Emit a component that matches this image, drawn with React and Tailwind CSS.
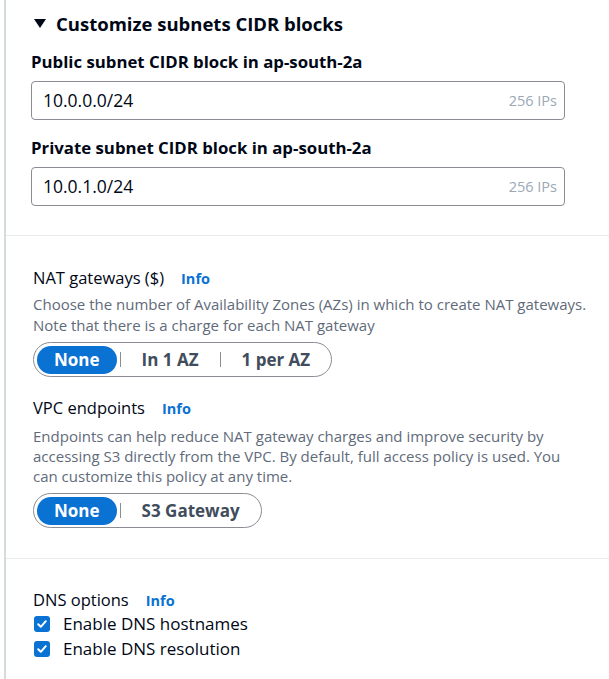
import React, { useState } from 'react';

const font = { fontFamily: '"Open Sans", "Noto Sans", Arial, sans-serif' };

const Info = ({ className = '' }) => (
    <span className={`text-[14.5px] font-bold text-[#0972d3] ${className}`}>Info</span>
);

const CidrInput = ({ label, value }) => (
    <div className="flex flex-col">
        <label className="text-[16.8px] font-bold text-[#000716] leading-[20px]">{label}</label>
        <div className="mt-[9px] w-[534px] h-[39px] border border-[#8c8c94] rounded-[4px] flex items-center justify-between pl-[11px] pr-[7px]">
            <span className="text-[17.5px] text-[#000716]">{value}</span>
            <span className="text-[14.5px] text-[#9ba7b6]">256 IPs</span>
        </div>
    </div>
);

const Segmented = ({ options, value, onChange }) => (
    <div className="inline-flex items-center h-[35px] border border-[#8c8c94] rounded-full p-[3px] self-start">
        {options.map((opt, i) => (
            <React.Fragment key={opt}>
                {i > 0 && <span className="w-px h-[15px] mx-[3px] bg-[#8c8c94]" />}
                <button
                    onClick={() => onChange(opt)}
                    className={
                        value === opt
                            ? 'h-[28px] px-[17px] rounded-full bg-[#0972d3] text-white text-[17px] font-bold'
                            : 'h-[28px] px-[18px] rounded-full text-[#414d5c] text-[17px] font-bold'
                    }
                >
                    {opt}
                </button>
            </React.Fragment>
        ))}
    </div>
);

const Check = ({ label, checked, onToggle }) => (
    <label className="flex items-center gap-[13px] h-[25px] cursor-pointer" onClick={onToggle}>
        <span className={`w-[16px] h-[16px] rounded-[3px] flex items-center justify-center ${checked ? 'bg-[#0972d3]' : 'border-2 border-[#8c8c94]'}`}>
            {checked && (
                <svg width="12" height="12" viewBox="0 0 12 12" fill="none">
                    <path d="M2.2 6.2 L4.8 8.8 L9.8 3.2" stroke="white" strokeWidth="2" strokeLinecap="round" strokeLinejoin="round" />
                </svg>
            )}
        </span>
        <span className="text-[17px] text-[#000716]">{label}</span>
    </label>
);

export default function App() {
    const [nat, setNat] = useState('None');
    const [vpce, setVpce] = useState('None');
    const [hostnames, setHostnames] = useState(true);
    const [resolution, setResolution] = useState(true);

    return (
        <div className="w-[609px] h-[679px] bg-white overflow-hidden" style={font}>
            <div className="ml-[4px] border-l-2 border-[#d5dbdb] h-full flex flex-col">
                <div className="pl-[25px] pt-[11px] pb-[29px]">
                    <div className="flex items-center gap-[10px] ml-[3px]">
                        <svg width="12" height="10" viewBox="0 0 12 10">
                            <path d="M0 0 H12 L6 9 Z" fill="#000716" />
                        </svg>
                        <span className="text-[18.5px] font-bold text-[#000716] leading-[26px]">Customize subnets CIDR blocks</span>
                    </div>
                    <div className="mt-[15px] flex flex-col gap-[18px]">
                        <CidrInput label="Public subnet CIDR block in ap-south-2a" value="10.0.0.0/24" />
                        <CidrInput label="Private subnet CIDR block in ap-south-2a" value="10.0.1.0/24" />
                    </div>
                </div>
                <div className="h-px bg-[#e9ebed]" />
                <div className="pl-[27px] pt-[29px] pb-[30px] flex flex-col">
                    <div className="flex items-baseline gap-[17px] leading-[26px]">
                        <span className="text-[16.5px] text-[#000716]">NAT gateways ($)</span>
                        <Info />
                    </div>
                    <p className="mt-[2px] max-w-[554px] text-[15px] leading-[21px] text-[#5f6b7a]">
                        Choose the number of Availability Zones (AZs) in which to create NAT gateways. Note that there is a charge for each NAT gateway
                    </p>
                    <div className="mt-[6px] flex">
                        <Segmented options={['None', 'In 1 AZ', '1 per AZ']} value={nat} onChange={setNat} />
                    </div>
                    <div className="mt-[18px] flex items-baseline gap-[17px] leading-[26px]">
                        <span className="text-[16.5px] text-[#000716]">VPC endpoints</span>
                        <Info />
                    </div>
                    <p className="mt-[4px] max-w-[554px] text-[15px] leading-[20px] text-[#5f6b7a]">
                        Endpoints can help reduce NAT gateway charges and improve security by accessing S3 directly from the VPC. By default, full access policy is used. You can customize this policy at any time.
                    </p>
                    <div className="mt-[7px] flex">
                        <Segmented options={['None', 'S3 Gateway']} value={vpce} onChange={setVpce} />
                    </div>
                </div>
                <div className="h-px bg-[#e9ebed]" />
                <div className="pl-[27px] pt-[31px] flex flex-col">
                    <div className="flex items-baseline gap-[17px] leading-[20px]">
                        <span className="text-[16.5px] text-[#000716]">DNS options</span>
                        <Info />
                    </div>
                    <div className="flex flex-col pl-[1px]">
                        <Check label="Enable DNS hostnames" checked={hostnames} onToggle={() => setHostnames(!hostnames)} />
                        <Check label="Enable DNS resolution" checked={resolution} onToggle={() => setResolution(!resolution)} />
                    </div>
                </div>
            </div>
        </div>
    );
}
